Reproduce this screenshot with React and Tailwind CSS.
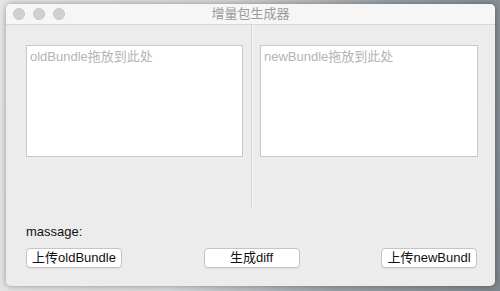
export default function App() {
  const font = { fontFamily: '"Liberation Sans", "Noto Sans CJK SC", sans-serif' };
  return (
    <div
      className="w-[500px] h-[291px] overflow-hidden pt-[4px] pl-[6px] bg-[linear-gradient(100deg,#e6e6e6_0%,#d8d9da_40%,#9aa2a8_70%,#7e878d_100%)]"
      style={font}
    >
      <div className="w-[489px] h-[282px] rounded-[5px] overflow-hidden shadow-[0_0_6px_rgba(0,0,0,0.35)] flex flex-col bg-[#ececec]">
        <div className="h-[21px] shrink-0 bg-[#f6f6f6] border-b border-[#d8d8d8] flex items-center relative">
          <div className="flex gap-[8px] pl-[7px]">
            <div className="w-[12px] h-[12px] rounded-full bg-[#d1d1d1] border border-[#c6c6c6]" />
            <div className="w-[12px] h-[12px] rounded-full bg-[#d1d1d1] border border-[#c6c6c6]" />
            <div className="w-[12px] h-[12px] rounded-full bg-[#d1d1d1] border border-[#c6c6c6]" />
          </div>
          <div className="absolute inset-0 flex items-center justify-center text-[13px] text-[#9b9b9b]">
            增量包生成器
          </div>
        </div>
        <div className="flex h-[182px] shrink-0">
          <div className="w-[245px] pl-[20px] pt-[20px]">
            <div className="w-[217px] h-[112px] bg-white border border-[#c9c9c9] px-[3px] pt-[3px] text-[13px] leading-[16px] text-[#b4b4b4]">
              oldBundle拖放到此处
            </div>
          </div>
          <div className="w-[1px] bg-[#d6d6d6] border-r border-[#f5f5f5] box-content" />
          <div className="pl-[7px] pt-[20px]">
            <div className="w-[218px] h-[112px] bg-white border border-[#c9c9c9] px-[3px] pt-[3px] text-[13px] leading-[16px] text-[#b4b4b4]">
              newBundle拖放到此处
            </div>
          </div>
        </div>
        <div className="pl-[20px] mt-[17px] text-[13px] leading-[16px] text-[#111]">massage:</div>
        <div className="flex justify-between pl-[20px] pr-[18px] mt-[8px]">
          <div className="w-[96px] h-[20px] bg-white border border-[#c4c4c4] rounded-[4px] flex items-center justify-center text-[13px] text-[#111] shadow-[0_1px_0_rgba(0,0,0,0.05)]">
            上传oldBundle
          </div>
          <div className="w-[96px] h-[20px] bg-white border border-[#c4c4c4] rounded-[4px] flex items-center justify-center text-[13px] text-[#111] shadow-[0_1px_0_rgba(0,0,0,0.05)]">
            生成diff
          </div>
          <div className="w-[96px] h-[20px] bg-white border border-[#c4c4c4] rounded-[4px] flex items-center justify-center text-[13px] text-[#111] overflow-hidden whitespace-nowrap shadow-[0_1px_0_rgba(0,0,0,0.05)]">
            上传newBundl
          </div>
        </div>
      </div>
    </div>
  );
}
